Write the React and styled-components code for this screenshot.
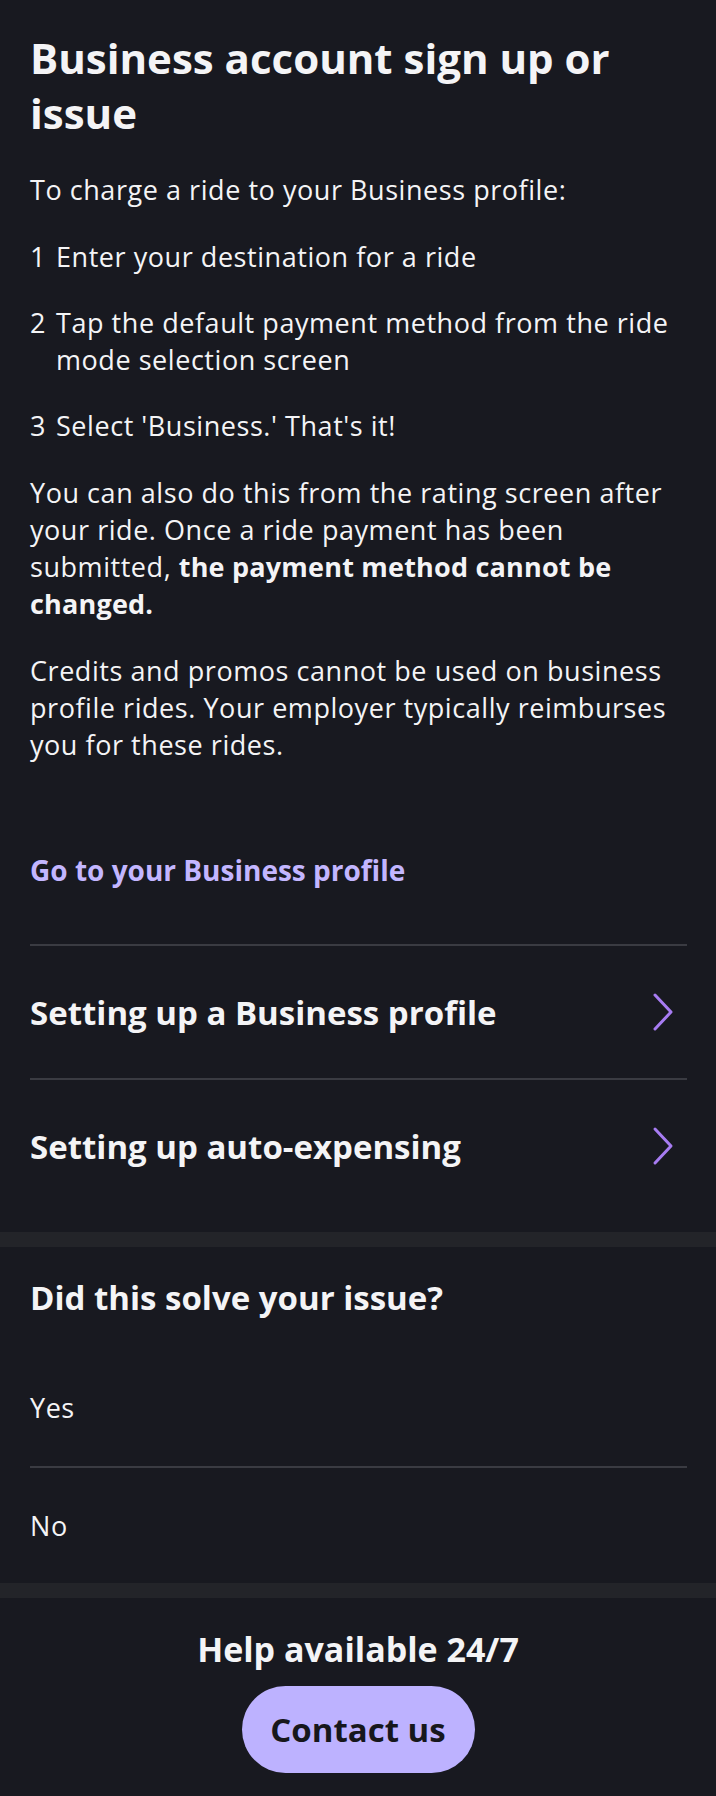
import React from 'react';
import styled, { createGlobalStyle } from 'styled-components';

const GlobalStyle = createGlobalStyle`
  html, body {
    margin: 0;
    padding: 0;
    background: #181920;
  }
  body {
    font-family: "Open Sans", Lato, "Liberation Sans", sans-serif;
    color: #f4f4f6;
    -webkit-font-smoothing: antialiased;
  }
`;

const Page = styled.div`
  width: 716px;
  background: #181920;
`;

const Article = styled.section`
  padding: 30px 29px 20px 30px;
`;

const Title = styled.h1`
  margin: 0 0 31px;
  font-size: 42px;
  line-height: 55px;
  font-weight: 700;
`;

const Paragraph = styled.p`
  margin: 0 0 ${p => p.$gap ?? 30}px;
  font-size: 27px;
  line-height: 37px;
  font-weight: 400;
  letter-spacing: 0.55px;

  strong {
    font-weight: 700;
    letter-spacing: 0.2px;
  }
`;

const Steps = styled.ol`
  list-style: none;
  margin: 0 0 30px;
  padding: 0;
  display: flex;
  flex-direction: column;
  gap: 29px;
`;

const Step = styled.li`
  display: flex;
  gap: 10px;
  font-size: 27px;
  line-height: 37px;
  letter-spacing: 0.55px;
`;

const StepNumber = styled.span`
  flex: none;
`;

const ProfileLink = styled.a`
  display: block;
  margin: 89px 0 55px;
  font-size: 28px;
  line-height: 37px;
  font-weight: 700;
  color: #c3b6ff;
  text-decoration: none;
`;

const LinkRow = styled.a`
  display: flex;
  align-items: center;
  justify-content: space-between;
  height: 132px;
  border-top: 2px solid #3a3b42;
  padding-right: 13px;
  color: #f4f4f6;
  text-decoration: none;
  font-size: 33px;
  font-weight: 700;
`;

const Band = styled.div`
  height: 15px;
  background: #232429;
`;

const Feedback = styled.section`
  padding: 31px 29px 0 30px;
`;

const Question = styled.h2`
  margin: 0 0 31px;
  font-size: 33px;
  line-height: 40px;
  font-weight: 700;
`;

const Answer = styled.button`
  display: flex;
  align-items: center;
  width: 100%;
  height: 117px;
  padding: 0;
  border: none;
  border-top: ${p => (p.$first ? 'none' : '2px solid #3a3b42')};
  background: transparent;
  color: #f4f4f6;
  font-family: inherit;
  font-size: 27px;
  letter-spacing: 0.55px;
  text-align: left;
`;

const Footer = styled.footer`
  display: flex;
  flex-direction: column;
  align-items: center;
  padding: 31px 0 21px;
`;

const HelpTitle = styled.h3`
  margin: 0 0 17px;
  font-size: 34px;
  line-height: 40px;
  font-weight: 700;
`;

const ContactButton = styled.button`
  width: 233px;
  height: 87px;
  border: none;
  border-radius: 44px;
  background: #bdb2ff;
  color: #17171c;
  font-family: inherit;
  font-size: 33px;
  font-weight: 700;
`;

const Chevron = () => (
  <svg width="22" height="40" viewBox="0 0 22 40" fill="none">
    <path
      d="M3 3 L19 20 L3 37"
      stroke="#a77cf2"
      strokeWidth="3"
      strokeLinecap="round"
      strokeLinejoin="round"
    />
  </svg>
);

const steps = [
  'Enter your destination for a ride',
  'Tap the default payment method from the ride mode selection screen',
  "Select 'Business.' That's it!",
];

const related = ['Setting up a Business profile', 'Setting up auto-expensing'];

const App = () => (
  <Page>
    <GlobalStyle />
    <Article>
      <Title>Business account sign up or issue</Title>
      <Paragraph>To charge a ride to your Business profile:</Paragraph>
      <Steps>
        {steps.map((s, i) => (
          <Step key={s}>
            <StepNumber>{i + 1}</StepNumber>
            <span>{s}</span>
          </Step>
        ))}
      </Steps>
      <Paragraph>
        You can also do this from the rating screen after your ride. Once a ride payment has
        been submitted, <strong>the payment method cannot be changed.</strong>
      </Paragraph>
      <Paragraph $gap={0}>
        Credits and promos cannot be used on business profile rides. Your employer typically
        reimburses you for these rides.
      </Paragraph>
      <ProfileLink href="#">Go to your Business profile</ProfileLink>
      {related.map(r => (
        <LinkRow href="#" key={r}>
          {r}
          <Chevron />
        </LinkRow>
      ))}
    </Article>
    <Band />
    <Feedback>
      <Question>Did this solve your issue?</Question>
      <Answer $first>Yes</Answer>
      <Answer>No</Answer>
    </Feedback>
    <Band />
    <Footer>
      <HelpTitle>Help available 24/7</HelpTitle>
      <ContactButton>Contact us</ContactButton>
    </Footer>
  </Page>
);

export default App;
